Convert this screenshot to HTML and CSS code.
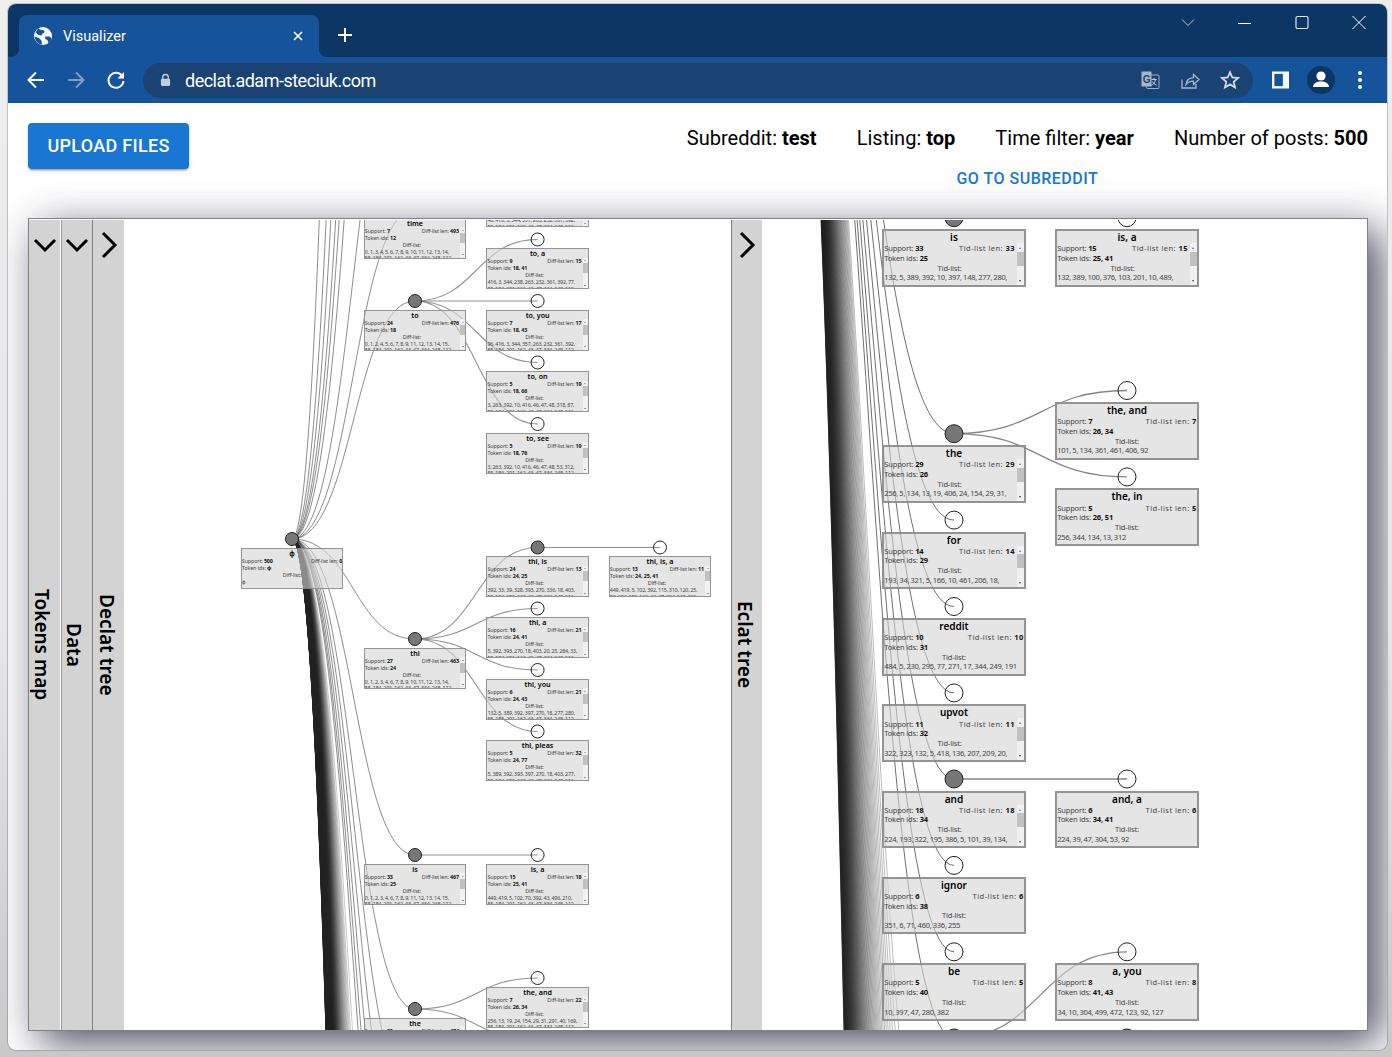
FILE: index.html
```html
<!DOCTYPE html>
<html lang="en">
<head>
<meta charset="utf-8">
<title>Visualizer</title>
<link rel="stylesheet" href="styles.css">
</head>
<body>
<div class="window">
  <div class="tabstrip">
    <div class="tab">
      <svg class="globe" viewBox="0 0 18 18"><circle cx="9" cy="9" r="9" fill="#fff"/><path d="M4 1.6C6 3 8 3 9.5 3.2L11 5 8.6 6.4 7.4 8.4 4.6 8 1.6 5.6ZM.6 9.6 5 11l2.4 2.6L8 17.6C4 17.4 1 14 .6 9.6ZM11.2 9.6l4.6-.2 1.6 2c-.4 2-1.4 3.6-3 4.8l-1-3.2-2.2-1Z" fill="#15539b"/></svg>
      <span class="tab-title">Visualizer</span>
      <svg class="tab-close" viewBox="0 0 10 10"><path d="M1 1l8 8M9 1l-8 8" stroke="#fff" stroke-width="1.7" fill="none"/></svg>
    </div>
    <svg class="new-tab" viewBox="0 0 16 16"><path d="M8 1v14M1 8h14" stroke="#fff" stroke-width="2" fill="none"/></svg>
    <div class="window-controls">
      <svg class="wc" viewBox="0 0 16 16"><path d="M2 4.500l6 6 6-6" stroke="#c3cedb" stroke-width="1" fill="none"/></svg>
      <svg class="wc" viewBox="0 0 16 16"><path d="M1 8.500h13" stroke="#fff" stroke-width="1" fill="none"/></svg>
      <svg class="wc" viewBox="0 0 16 16"><rect x="2" y="1.500" width="12" height="12" rx="1.500" stroke="#dfe5ec" stroke-width="1.200" fill="none"/></svg>
      <svg class="wc" viewBox="0 0 16 16"><path d="M1.500 1l13 13M14.500 1l-13 13" stroke="#fff" stroke-width="1" fill="none"/></svg>
    </div>
  </div>
  <div class="toolbar">
    <svg class="tool" viewBox="0 0 20 20"><path d="M18 10H3M10 2.500 2.500 10l7.500 7.500" stroke="#fff" stroke-width="2" fill="none"/></svg>
    <svg class="tool dim" viewBox="0 0 20 20"><path d="M2 10h15M10 2.500l7.500 7.500-7.500 7.500" stroke="#7f9fc6" stroke-width="2" fill="none"/></svg>
    <svg class="tool" viewBox="0 0 20 20"><path d="M16.500 6.500A7.500 7.500 0 1 0 17.500 11" stroke="#fff" stroke-width="2" fill="none"/><path d="M18 2v6.500h-6.500Z" fill="#fff"/></svg>
    <div class="omnibox">
      <svg class="lock" viewBox="0 0 12 14"><path d="M3 6V4a3 3 0 0 1 6 0v2" stroke="#c2cddb" stroke-width="1.500" fill="none"/><rect x="1" y="5.500" width="10" height="8" rx="1.200" fill="#c2cddb"/></svg>
      <span class="url">declat.adam-steciuk.com</span>
      <div class="omni-actions">
        <svg class="omni-icon" viewBox="0 0 20 20"><rect x="6.500" y="5" width="12.500" height="13.500" rx="1" fill="none" stroke="#9fb0c4" stroke-width="1"/><path d="M1.500 1.500h10v15h-10Z" fill="#aab6c4"/><text x="2.800" y="13" class="g-letter">G</text><path d="M11.500 9.500h5M14 8v1.500M15.500 9.500c-.5 3-2.500 5-4 5.500M12.500 11.500c.8 1.500 2.300 3 4 3.500" stroke="#c3cedb" stroke-width="1" fill="none"/></svg>
        <svg class="omni-icon" viewBox="0 0 20 20"><path d="M2 9.500v8.500h14v-4" stroke="#aab8c8" stroke-width="1.300" fill="none"/><path d="M6 14.500c.5-4 3-6.500 7.500-6.800V4.500L19 9.500l-5.500 5v-3.300C10 11.200 7.800 12.300 6 14.500Z" stroke="#aab8c8" stroke-width="1.300" fill="none"/></svg>
        <svg class="omni-icon" viewBox="0 0 20 20"><path d="M10 2.200l2.300 5.300 5.700.5-4.300 3.800 1.300 5.600-5-3-5 3 1.300-5.600L2 8l5.700-.5Z" stroke="#d2dbe6" stroke-width="1.800" fill="none"/></svg>
      </div>
    </div>
    <svg class="side-panel" viewBox="0 0 18 18"><rect width="18" height="18" fill="#fff"/><rect x="2.500" y="2.500" width="9" height="13" fill="#15539b"/></svg>
    <svg class="avatar" viewBox="0 0 28 28"><circle cx="14" cy="14" r="14" fill="#0c3764"/><circle cx="14" cy="10" r="4.600" fill="#fff"/><path d="M6 21c0-3.500 3.500-5.500 8-5.500s8 2 8 5.500Z" fill="#fff"/></svg>
    <svg class="dots" viewBox="0 0 6 20"><circle cx="3" cy="3" r="2" fill="#fff"/><circle cx="3" cy="10" r="2" fill="#fff"/><circle cx="3" cy="17" r="2" fill="#fff"/></svg>
  </div>
  <main class="page">
    <header class="page-header">
      <button class="upload-btn">UPLOAD FILES</button>
      <div class="info">
        <div class="stats">
          <span>Subreddit: <b>test</b></span>
          <span>Listing: <b>top</b></span>
          <span>Time filter: <b>year</b></span>
          <span>Number of posts: <b>500</b></span>
        </div>
        <a class="subreddit-link">GO TO SUBREDDIT</a>
      </div>
    </header>
    <section class="panel">
      <div class="bar">
        <svg class="chev" viewBox="0 0 28 28"><path d="M4 9l10 10L24 9" class="chev-line"/></svg>
        <span class="bar-label">Tokens map</span>
      </div>
      <div class="bar bar-line-left">
        <svg class="chev" viewBox="0 0 28 28"><path d="M4 9l10 10L24 9" class="chev-line"/></svg>
        <span class="bar-label">Data</span>
      </div>
      <div class="bar bar-dark-left bar-declat">
        <svg class="chev" viewBox="0 0 28 28"><path d="M8 2l12 12L8 26" class="chev-line"/></svg>
        <span class="bar-label">Declat tree</span>
      </div>
      <div class="canvas" id="declat"></div>
      <div class="bar bar-dark-left bar-eclat">
        <svg class="chev" viewBox="0 0 28 28"><path d="M8 2l12 12L8 26" class="chev-line"/></svg>
        <span class="bar-label">Eclat tree</span>
      </div>
      <div class="canvas" id="eclat"></div>
    </section>
  </main>
</div>
<script src="tree.js"></script>
</body>
</html>
```
FILE: styles.css
```css
* { box-sizing: border-box; }
html, body { margin: 0; height: 1057px; overflow: hidden; }
body {
  padding: 4px 5px 7px 8px;
  background: linear-gradient(#eeeeee, #e6e6e6 60%, #c8c8c8);
  font-family: "Noto Sans", "Open Sans", sans-serif;
}
.window {
  height: 1046px;
  display: flex;
  flex-direction: column;
  border-radius: 8px;
  overflow: hidden;
  background: #fff;
  box-shadow: 0 0 0 1px rgba(0, 0, 0, .18);
}

/* browser chrome */
.tabstrip {
  height: 53px;
  flex: none;
  display: flex;
  align-items: flex-end;
  padding-left: 11px;
  background: #0c3764;
}
.tab {
  position: relative;
  width: 300px;
  height: 42px;
  display: flex;
  align-items: center;
  padding: 0 16px 0 15px;
  background: #15539b;
  border-radius: 8px 8px 0 0;
  color: #fff;
}
.tab::before, .tab::after {
  content: "";
  position: absolute;
  bottom: 0;
  width: 9px;
  height: 9px;
}
.tab::before { left: -9px; background: radial-gradient(circle at 0 0, transparent 9px, #15539b 9.500px); }
.tab::after { right: -9px; background: radial-gradient(circle at 100% 0, transparent 9px, #15539b 9.500px); }
.globe { width: 18px; height: 18px; flex: none; }
.tab-title { margin-left: 11px; flex: 1; font: 14.500px Roboto, sans-serif; }
.tab-close { width: 10px; height: 10px; flex: none; }
.new-tab { width: 16px; height: 16px; margin: 0 0 14px 18px; flex: none; }
.window-controls {
  margin-left: auto;
  align-self: flex-start;
  display: flex;
  gap: 41px;
  padding: 11px 20px 0 0;
}
.wc { width: 16px; height: 16px; }
.toolbar {
  height: 46px;
  flex: none;
  display: flex;
  align-items: center;
  padding: 0 23px 0 18px;
  background: #15539b;
}
.tool { width: 20px; height: 20px; margin-right: 20px; flex: none; }
.omnibox {
  width: 1110px;
  height: 35px;
  margin: 0 0 0 -3px;
  flex: none;
  display: flex;
  align-items: center;
  padding: 0 13px 0 17px;
  border-radius: 18px;
  background: #1a4273;
}
.lock { width: 11px; height: 14px; flex: none; }
.url { margin-left: 14px; color: #fff; font: 18px Roboto, sans-serif; letter-spacing: -.500px; }
.omni-actions { margin-left: auto; display: flex; gap: 20px; }
.omni-icon { width: 20px; height: 20px; }
.g-letter { font: 700 10px "Liberation Sans", sans-serif; fill: #15457c; }
.side-panel { width: 17px; height: 18px; margin-left: 19px; flex: none; }
.avatar { width: 28px; height: 28px; margin-left: 18px; flex: none; }
.dots { width: 6px; height: 20px; margin-left: 22px; flex: none; }

/* page */
.page {
  flex: 1;
  min-height: 0;
  display: flex;
  flex-direction: column;
  padding: 20px 19px 19px 20px;
  overflow: hidden;
}
.page-header {
  height: 95px;
  flex: none;
  display: flex;
  justify-content: space-between;
  align-items: flex-start;
}
.upload-btn {
  width: 161px;
  height: 46px;
  padding: 0 0 2px;
  border: 0;
  border-radius: 4px;
  background: #1976d2;
  color: #fff;
  font: 500 18px Roboto, sans-serif;
  letter-spacing: .3px;
  box-shadow: 0 3px 1px -2px rgba(0,0,0,.2), 0 2px 2px rgba(0,0,0,.14), 0 1px 5px rgba(0,0,0,.12);
}
.info { display: flex; flex-direction: column; align-items: center; }
.stats { display: flex; gap: 40px; font: 20.050px/30px Roboto, sans-serif; color: #000; }
.stats b { font-weight: 700; }
.subreddit-link {
  margin-top: 16px;
  color: #1976d2;
  font: 500 16px/20px Roboto, sans-serif;
  letter-spacing: .5px;
}
.panel {
  flex: 1;
  min-height: 0;
  display: flex;
  border: 1px solid #808080;
  padding-top: 1px;
  background: #fff;
  box-shadow: 12px 12px 40px rgba(30, 30, 60, .8);
}
.bar {
  width: 31px;
  flex: none;
  display: flex;
  flex-direction: column;
  align-items: center;
  background: #d3d3d3;
  position: relative;
}
.bar-line-left { width: 32px; border-left: 1px solid #fff; box-shadow: inset 1px 0 #999; padding-left: 1px; }
.bar-dark-left { width: 32px; border-left: 1px solid #808080; }
.bar-eclat { width: 31px; }
.chev { width: 28px; height: 28px; margin-top: 11px; flex: none; }
.chev-line { fill: none; stroke: #000; stroke-width: 3; }
.bar-label {
  position: absolute;
  top: 40px;
  bottom: 0;
  left: 0;
  width: 26px;
  display: flex;
  justify-content: center;
  align-items: center;
  writing-mode: vertical-rl;
  font-size: 19px;
  font-weight: 600;
  color: #000;
}
.bar-declat .bar-label { left: 1px; }
.canvas { flex: 1; min-width: 0; position: relative; overflow: hidden; background: #fff; }
#declat { flex: 607 0 0; }
#eclat { flex: 605 0 0; }
.edges { position: absolute; left: 0; top: 0; width: 100%; height: 100%; }
.edge { fill: none; stroke: #222; stroke-width: 1; stroke-opacity: .65; }
.edge-child { stroke: #666; stroke-width: 1.300; stroke-opacity: .8; }
#declat .edge { stroke-width: .8; }
#declat .edge-child { stroke: #777; stroke-width: 1.100; }
.node { stroke: #222; stroke-width: 1; fill: none; }
.node-open { fill: #777; }

/* diagram cards: sizes in em so both trees share the same rules */
.card {
  position: absolute;
  width: 17.950em;
  height: 7.200em;
  display: flex;
  flex-direction: column;
  border: .250em solid rgba(128, 128, 128, .8);
  background: rgba(211, 211, 211, .6);
  color: #444;
  font-size: 8px;
}
#declat .card { font-size: 5.700px; }
.card-title {
  height: 1.200em;
  flex: none;
  text-align: center;
  font-size: 1.250em;
  line-height: 1.200em;
  font-weight: 600;
  color: #000;
}
.card-body { flex: 1; min-height: 0; display: flex; overflow: hidden; }
.card-content {
  flex: 1;
  min-width: 0;
  overflow: hidden;
  padding-top: .150em;
  font-size: .940em;
  line-height: 1.290em;
  letter-spacing: -.020em;
}
.card-row { display: flex; justify-content: space-between; }
#eclat .card-row span:last-child { letter-spacing: .060em; }
.card-content b { color: #111; font-weight: 700; }
.card-center { text-align: center; }
.card-list { letter-spacing: -.035em; word-spacing: -.050em; white-space: nowrap; overflow: hidden; }
.scrollbar {
  width: .900em;
  margin-left: .200em;
  flex: none;
  display: flex;
  flex-direction: column;
  align-items: center;
  background: #f1f1f1;
}
.sb-up, .sb-down {
  width: 0;
  height: 0;
  margin: .500em 0 .350em;
  border-left: .220em solid transparent;
  border-right: .220em solid transparent;
  border-bottom: .280em solid #777;
}
.sb-down { margin: auto 0 .400em; border-bottom: 0; border-top: .280em solid #444; }
.sb-thumb { width: 100%; height: 1.750em; background: #c1c1c1; }
```
FILE: tree.js
```js
// Data for both trees, in page coordinates of each node's circle centre.
const MORE = "55, 184, 291, 162, 43, 47, 334, 248, 112,";
const SVG = "http://www.w3.org/2000/svg";

const declat = {
  id: "declat", origin: [124, 220], r: 6.5, cardW: 102.3, cardDy: 8.5,
  root: [292, 539], heading: "Diff-list:", lenLabel: "Diff-list len",
  // rows that lie outside the visible part of the tree
  offscreen: [12, -367, -599, -818, -1235, -1841, -3401, 1100, 1180, 1259, 1330, 1394],
  farFrom: 1556, farCount: 150, farTo: 4259, farPack: 0.72, farInk: 0.6,
  nodes: [
    ["φ", 292, 539, null, 500, 0, "φ", "φ", 0, 1],
    ["time", 415, 209, "φ", 7, 493, "12", "0, 1, 3, 4, 5, 6, 7, 8, 9, 10, 11, 12, 13, 14,", 1, 1],
    ["time, a", 537.6, 177.5, "time", 7, 15, "12, 41", "46, 416, 3, 344, 357, 263, 232, 361, 392,", 1, 0],
    ["to", 415, 301, "φ", 24, 476, "18", "0, 1, 2, 4, 5, 6, 7, 8, 9, 11, 12, 13, 14, 15,", 1, 1],
    ["to, a", 537.6, 239.5, "to", 9, 15, "18, 41", "416, 3, 344, 238, 263, 232, 361, 392, 77,", 1, 0],
    ["to, you", 537.6, 301, "to", 7, 17, "18, 43", "96, 416, 3, 344, 357, 263, 232, 361, 392,", 1, 0],
    ["to, on", 537.6, 362.5, "to", 5, 19, "18, 66", "3, 263, 392, 10, 416, 46, 47, 48, 318, 87,", 1, 0],
    ["to, see", 537.6, 424, "to", 5, 19, "18, 76", "3, 263, 392, 10, 416, 46, 47, 48, 53, 312,", 1, 0],
    ["thi", 415, 639, "φ", 27, 463, "24", "0, 1, 2, 3, 4, 6, 7, 8, 9, 10, 11, 12, 13, 14,", 1, 1],
    ["thi, is", 537.6, 547.5, "thi", 24, 13, "24, 25", "392, 33, 39, 328, 393, 270, 336, 18, 403,", 1, 1],
    ["thi, is, a", 660, 547.5, "thi, is", 13, 11, "24, 25, 41", "449, 419, 5, 102, 392, 115, 310, 120, 25,", 1, 0],
    ["thi, a", 537.6, 608.5, "thi", 16, 21, "24, 41", "5, 392, 393, 270, 18, 403, 20, 25, 284, 33,", 1, 0],
    ["thi, you", 537.6, 670, "thi", 6, 21, "24, 43", "132, 5, 389, 392, 397, 270, 18, 277, 280,", 1, 0],
    ["thi, pleas", 537.6, 731.5, "thi", 5, 32, "24, 77", "5, 389, 392, 393, 397, 270, 18, 403, 277,", 1, 0],
    ["is", 415, 855, "φ", 33, 467, "25", "0, 1, 2, 3, 4, 6, 7, 8, 9, 11, 12, 13, 14, 15,", 1, 1],
    ["is, a", 537.6, 855, "is", 15, 18, "25, 41", "449, 419, 5, 102, 70, 392, 43, 496, 210,", 1, 0],
    ["the", 415, 1009, "φ", 29, 474, "26", "0, 1, 2, 3, 4, 6, 7, 8, 9, 11, 12, 13, 14, 15,", 1, 1],
    ["the, and", 537.6, 978, "the", 7, 22, "26, 34", "256, 13, 19, 24, 154, 29, 31, 291, 40, 169,", 1, 0],
    ["the, in", 537.6, 1040, "the", 5, 24, "26, 51", "256, 13, 19, 24, 154, 29, 31, 291, 40, 169,", 1, 0]
  ]
};

const eclat = {
  id: "eclat", origin: [762, 220], r: 9, cardW: 143.6, cardDy: 11.5,
  root: [781.5, -226], heading: "Tid-list:", lenLabel: "Tid-list len",
  offscreen: [],
  farFrom: 1317, farCount: 100, farTo: 4874, farPack: 0.9, farInk: 0.3,
  nodes: [
    ["is", 954, 217.7, "φ", 33, 33, "25", "132, 5, 389, 392, 10, 397, 148, 277, 280,", 1, 1],
    ["is, a", 1127, 217.7, "is", 15, 15, "25, 41", "132, 389, 100, 376, 103, 201, 10, 489,", 1, 0],
    ["the", 954, 433.7, "φ", 29, 29, "26", "256, 5, 134, 13, 19, 406, 24, 154, 29, 31,", 1, 1],
    ["the, and", 1127, 390.5, "the", 7, 7, "26, 34", "101, 5, 134, 361, 461, 406, 92", 0, 0],
    ["the, in", 1127, 476.9, "the", 5, 5, "26, 51", "256, 344, 134, 13, 312", 0, 0],
    ["for", 954, 520.1, "φ", 14, 14, "29", "193, 34, 321, 5, 166, 10, 461, 206, 18,", 1, 0],
    ["reddit", 954, 606.5, "φ", 10, 10, "31", "484, 5, 230, 295, 77, 271, 17, 344, 249, 191", 0, 0],
    ["upvot", 954, 692.9, "φ", 11, 11, "32", "322, 323, 132, 5, 418, 136, 207, 209, 20,", 1, 0],
    ["and", 954, 779, "φ", 18, 18, "34", "224, 193, 322, 195, 386, 5, 101, 39, 134,", 1, 1],
    ["and, a", 1127, 779, "and", 6, 6, "34, 41", "224, 39, 47, 304, 53, 92", 0, 0],
    ["ignor", 954, 865.4, "φ", 6, 6, "38", "351, 6, 71, 460, 336, 255", 0, 0],
    ["be", 954, 951.8, "φ", 5, 5, "40", "10, 397, 47, 280, 382", 0, 0],
    ["a", 954, 1038, "φ", 41, 41, "41", "", 0, 1],
    ["a, you", 1127, 951.8, "a", 8, 8, "41, 43", "34, 10, 304, 499, 472, 123, 92, 127", 0, 0],
    ["a, the", 1127, 1038, "a", 9, 9, "41, 44", "", 0, 1]
  ]
};

function link(a, b) {
  const m = (a[0] + b[0]) / 2;
  return `M${a[0]} ${a[1]}C${m} ${a[1]} ${m} ${b[1]} ${b[0]} ${b[1]}`;
}

function addSvg(parent, name, attrs) {
  const el = document.createElementNS(SVG, name);
  for (const k in attrs) el.setAttribute(k, attrs[k]);
  parent.appendChild(el);
  return el;
}

function textEl(tag, cls, text) {
  const el = document.createElement(tag);
  if (cls) el.className = cls;
  if (text !== undefined) el.textContent = text;
  return el;
}

function labelled(label, value) {
  const s = textEl("span");
  s.append(label + ": ", textEl("b", "", String(value)));
  return s;
}

function buildCard(tree, n) {
  const [title, x, y, , support, len, ids, list, scroll] = n;
  const card = textEl("div", "card");
  card.style.left = (x - tree.cardW / 2 - tree.origin[0]) + "px";
  card.style.top = (y + tree.cardDy - tree.origin[1]) + "px";
  card.append(textEl("div", "card-title", title));
  const body = textEl("div", "card-body");
  const content = textEl("div", "card-content");
  const row = textEl("div", "card-row");
  row.append(labelled("Support", support), labelled(tree.lenLabel, len));
  const idsRow = textEl("div");
  idsRow.append(labelled("Token ids", ids));
  content.append(row, idsRow, textEl("div", "card-center", tree.heading), textEl("div", "card-list", list));
  if (scroll) content.append(textEl("div", "card-list", MORE));
  body.append(content);
  if (scroll) {
    const sb = textEl("div", "scrollbar");
    sb.append(textEl("div", "sb-up"), textEl("div", "sb-thumb"), textEl("div", "sb-down"));
    body.append(sb);
  }
  card.append(body);
  return card;
}

function buildTree(tree) {
  const host = document.getElementById(tree.id);
  const w = host.clientWidth, h = host.clientHeight;
  const svg = addSvg(host, "svg", {
    class: "edges",
    viewBox: `${tree.origin[0]} ${tree.origin[1]} ${w} ${h}`
  });
  const colX = tree.nodes.find(n => n[3] === "φ")[1];
  const edge = (a, b, cls) => addSvg(svg, "path", { class: cls, d: link(a, b) });

  // The long tail of rows below the visible area: rows pack tighter and the
  // strokes darken the further down the tree they end.
  for (let i = tree.farCount; i >= 0; i--) {
    const u = i / tree.farCount;
    const y = tree.farFrom + (tree.farTo - tree.farFrom) * Math.pow(u, tree.farPack);
    edge(tree.root, [colX, y], "edge").style.strokeOpacity = (0.3 + tree.farInk * u).toFixed(2);
  }
  tree.offscreen.forEach(y => edge(tree.root, [colX, y], "edge"));

  const byKey = { "φ": [null, tree.root[0], tree.root[1]] };
  tree.nodes.forEach(n => { byKey[n[0]] = n; });
  tree.nodes.forEach(n => {
    if (!n[3]) return;
    edge([byKey[n[3]][1], byKey[n[3]][2]], [n[1], n[2]], n[3] === "φ" ? "edge" : "edge edge-child");
  });
  tree.nodes.forEach(n => {
    addSvg(svg, "circle", { cx: n[1], cy: n[2], r: tree.r, class: n[9] ? "node node-open" : "node" });
  });
  tree.nodes.forEach(n => host.appendChild(buildCard(tree, n)));
}

buildTree(declat);
buildTree(eclat);
```
